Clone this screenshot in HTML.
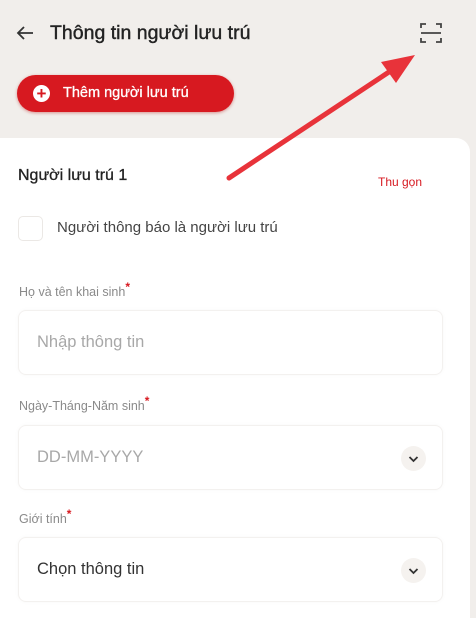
<!DOCTYPE html>
<html><head><meta charset="utf-8"><style>
*{margin:0;padding:0;box-sizing:border-box}
body{width:476px;height:606px;overflow:hidden;background:#f1eeeb;font-family:"Liberation Sans",sans-serif;position:relative}
.abs{position:absolute}
.card{left:0;top:138px;width:470px;height:480px;background:#fff;border-radius:0 14px 0 0}
.lbl{font-size:12.5px;color:#8a8a8a;left:19px}
.lbl b{color:#d71920;font-size:12px;vertical-align:5px;font-weight:bold}
.box{left:18px;width:425px;height:65px;border:1px solid #f3f1ef;border-radius:8px;box-shadow:0 0 4px rgba(0,0,0,.03)}
.box span{position:absolute;left:18px;top:22px;font-size:16.5px;color:#a8a8a8}
.chev{position:absolute;right:16px;top:20px;width:25px;height:25px;border-radius:50%;background:#f5f2ef}
</style></head><body>
<svg class="abs" style="left:14px;top:24px" width="22" height="18" viewBox="0 0 22 18"><path d="M19 9H4M10 3L4 9l6 6" fill="none" stroke="#333" stroke-width="1.8"/></svg>
<div class="abs" style="left:50px;top:22px;font-size:19.5px;color:#222;-webkit-text-stroke:0.4px #222">Thông tin người lưu trú</div>
<svg class="abs" style="left:418px;top:21px" width="26" height="24" viewBox="0 0 26 24" fill="none" stroke="#444" stroke-width="1.8"><path d="M3 7V3h5M18 3h5v4M3 17v4h5M18 21h5v-4M3 12h20"/></svg>
<div class="abs" style="left:17px;top:75px;width:217px;height:37px;border-radius:19px;background:#d71920;box-shadow:0 1px 3px rgba(180,0,0,.4)"></div>
<div class="abs" style="left:33px;top:85px;width:17px;height:17px;border-radius:50%;background:#fff;color:#d71920;font-weight:bold;font-size:17px;line-height:17px;text-align:center">+</div>
<div class="abs" style="left:63px;top:85px;font-size:14.5px;color:#fff;-webkit-text-stroke:0.3px #fff">Thêm người lưu trú</div>
<div class="abs card"></div>
<div class="abs" style="left:18px;top:167px;font-size:16px;color:#222;-webkit-text-stroke:0.3px #222">Người lưu trú 1</div>
<div class="abs" style="left:378px;top:175px;font-size:12px;color:#d71920">Thu gọn</div>
<div class="abs" style="left:18px;top:216px;width:25px;height:25px;border:1px solid #ebe8e5;border-radius:5px"></div>
<div class="abs" style="left:57px;top:219px;font-size:15px;color:#444">Người thông báo là người lưu trú</div>
<div class="abs lbl" style="top:280px">Họ và tên khai sinh<b>*</b></div>
<div class="abs box" style="top:310px"><span>Nhập thông tin</span></div>
<div class="abs lbl" style="top:394px">Ngày-Tháng-Năm sinh<b>*</b></div>
<div class="abs box" style="top:425px"><span>DD-MM-YYYY</span><div class="chev"><svg width="25" height="25"><path d="M8.5 11l4 4 4-4" fill="none" stroke="#333" stroke-width="1.8"/></svg></div></div>
<div class="abs lbl" style="top:507px">Giới tính<b>*</b></div>
<div class="abs box" style="top:537px"><span style="color:#333">Chọn thông tin</span><div class="chev"><svg width="25" height="25"><path d="M8.5 11l4 4 4-4" fill="none" stroke="#333" stroke-width="1.8"/></svg></div></div>
<svg class="abs" style="left:0;top:0" width="476" height="606"><line x1="229" y1="178" x2="395" y2="68" stroke="#e8333a" stroke-width="5" stroke-linecap="round"/><path d="M415 55L381 62L396 83Z" fill="#e8333a"/></svg>
</body></html>
